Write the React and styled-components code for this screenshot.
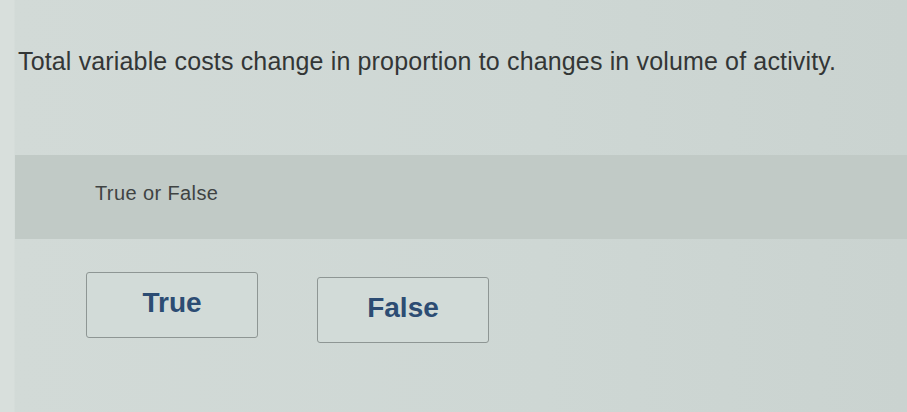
import React from "react";
import styled, { createGlobalStyle } from "styled-components";

const Global = createGlobalStyle`
  html, body { margin: 0; padding: 0; }
  body {
    background: #d3dbd8;
    font-family: "Liberation Sans", Arial, sans-serif;
    width: 907px;
    height: 412px;
    overflow: hidden;
  }
`;

const Page = styled.div`
  display: flex;
  flex-direction: column;
  width: 907px;
  height: 412px;
  background: linear-gradient(90deg, #d8dfdc 0px, #d8dfdc 14px, #d2dad7 15px, #ced7d4 60%, #cad3d0 100%);
`;

const Question = styled.p`
  margin: 0;
  padding: 46px 0 0 18px;
  height: 155px;
  box-sizing: border-box;
  font-size: 25px;
  line-height: 30px;
  color: #333636;
  letter-spacing: 0.15px;
`;

const Band = styled.div`
  display: flex;
  align-items: center;
  margin-left: 15px;
  height: 84px;
  padding: 0 0 8px 80px;
  box-sizing: border-box;
  background: #c1cac6;
  font-size: 20px;
  letter-spacing: 0.4px;
  color: #3f4343;
`;

const Choices = styled.div`
  display: flex;
  gap: 59px;
  padding: 33px 0 0 86px;
`;

const Choice = styled.button`
  width: 172px;
  height: 66px;
  margin-top: ${(p) => p.$drop || 0}px;
  box-sizing: border-box;
  border: 1.5px solid #8e9694;
  border-radius: 3px;
  background: #d2dbd8;
  font-family: "Liberation Sans", Arial, sans-serif;
  font-size: 28px;
  font-weight: 700;
  color: #2c4c73;
  padding: 0 0 4px;
  cursor: pointer;
`;

export default function App() {
  return (
    <>
      <Global />
      <Page>
        <Question>
          Total variable costs change in proportion to changes in volume of activity.
        </Question>
        <Band>True or False</Band>
        <Choices>
          <Choice>True</Choice>
          <Choice $drop={5}>False</Choice>
        </Choices>
      </Page>
    </>
  );
}
